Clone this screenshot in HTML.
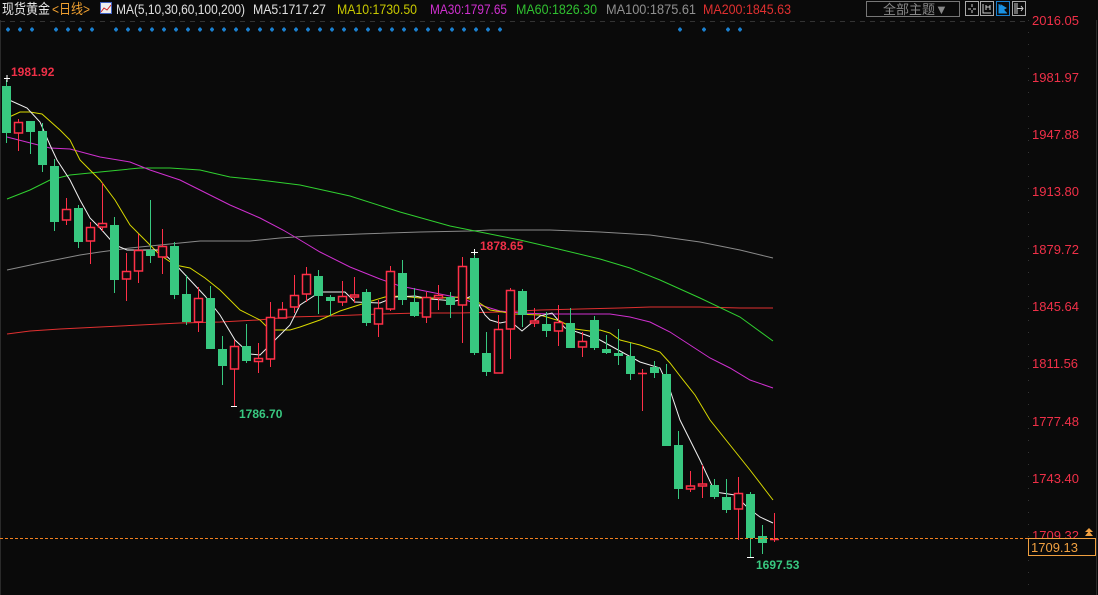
<!DOCTYPE html>
<html><head><meta charset="utf-8"><style>
html,body{margin:0;padding:0;background:#0a0a0a;width:1098px;height:595px;overflow:hidden}
svg{display:block}
text{font-family:"Liberation Sans","Noto Sans CJK SC",sans-serif}
</style></head><body>
<svg width="1098" height="595" viewBox="0 0 1098 595" xmlns="http://www.w3.org/2000/svg">
<rect width="1098" height="595" fill="#0a0a0a"/>
<line x1="0.5" y1="20" x2="0.5" y2="595" stroke="#2a2a2a"/>
<line x1="1096.5" y1="20" x2="1096.5" y2="595" stroke="#2a2a2a"/>
<line x1="1028.5" y1="20" x2="1028.5" y2="595" stroke="#333" stroke-dasharray="1,11"/>
<line x1="0" y1="21.5" x2="1028" y2="21.5" stroke="#333" stroke-dasharray="5,5"/>
<!-- header -->
<text x="2" y="14" font-size="14" fill="#e8e8e8" textLength="48" lengthAdjust="spacingAndGlyphs">现货黄金</text>
<text x="52" y="14" font-size="14" fill="#f0a030" textLength="38" lengthAdjust="spacingAndGlyphs">&lt;日线&gt;</text>
<rect x="100.5" y="2.5" width="11" height="11" fill="#eee" stroke="#4060c0"/>
<path d="M101 12 L104 8 L107 10 L111 5" stroke="#d02020" fill="none"/>
<text x="116" y="14" font-size="14" fill="#e0e0e0" textLength="129" lengthAdjust="spacingAndGlyphs">MA(5,10,30,60,100,200)</text>
<text x="253" y="14" font-size="14" fill="#e0e0e0" textLength="73" lengthAdjust="spacingAndGlyphs">MA5:1717.27</text>
<text x="337" y="14" font-size="14" fill="#c8c800" textLength="80" lengthAdjust="spacingAndGlyphs">MA10:1730.50</text>
<text x="430" y="14" font-size="14" fill="#d030d0" textLength="77" lengthAdjust="spacingAndGlyphs">MA30:1797.65</text>
<text x="516" y="14" font-size="14" fill="#30c030" textLength="81" lengthAdjust="spacingAndGlyphs">MA60:1826.30</text>
<text x="606" y="14" font-size="14" fill="#909090" textLength="90" lengthAdjust="spacingAndGlyphs">MA100:1875.61</text>
<text x="703" y="14" font-size="14" fill="#e03030" textLength="88" lengthAdjust="spacingAndGlyphs">MA200:1845.63</text>
<rect x="866.5" y="1.5" width="93" height="15" fill="#0a0a0a" stroke="#777"/>
<text x="883" y="14" font-size="13" fill="#888">全部主题▼</text>
<rect x="965.5" y="1.5" width="13" height="14" fill="none" stroke="#aaa"/>
<path d="M972 4v3M972 10v3M968 9h3M973 9h3" stroke="#ccc"/>
<rect x="980.5" y="1.5" width="13" height="14" fill="none" stroke="#aaa"/>
<path d="M983 4v9h8M986 5v5M986 7h4M990 5v5" stroke="#ccc" fill="none"/>
<rect x="996.5" y="1.5" width="13" height="14" fill="none" stroke="#1a80d0"/>
<path d="M999 4v9h8M1001 5v6l5-3z" stroke="#1a90e0" fill="#1a90e0"/>
<rect x="1012.5" y="1.5" width="13" height="14" fill="none" stroke="#aaa"/>
<path d="M1015 3v11M1017 3v11M1017 8.5h6M1021 6l2 2.5-2 2.5" stroke="#ccc" fill="none"/>
<!-- dots -->
<g stroke="#1a80d0" stroke-width="2">
<path d="M6 29.5h4M8 27.5v4 M18 29.5h4M20 27.5v4 M30 29.5h4M32 27.5v4 M54 29.5h4M56 27.5v4 M66 29.5h4M68 27.5v4 M78 29.5h4M80 27.5v4 M90 29.5h4M92 27.5v4
M114 29.5h4M116 27.5v4 M126 29.5h4M128 27.5v4 M138 29.5h4M140 27.5v4 M150 29.5h4M152 27.5v4 M162 29.5h4M164 27.5v4 M174 29.5h4M176 27.5v4 M186 29.5h4M188 27.5v4 M198 29.5h4M200 27.5v4 M210 29.5h4M212 27.5v4 M222 29.5h4M224 27.5v4 M234 29.5h4M236 27.5v4 M246 29.5h4M248 27.5v4 M258 29.5h4M260 27.5v4 M270 29.5h4M272 27.5v4 M282 29.5h4M284 27.5v4 M294 29.5h4M296 27.5v4 M306 29.5h4M308 27.5v4 M318 29.5h4M320 27.5v4 M330 29.5h4M332 27.5v4 M342 29.5h4M344 27.5v4 M354 29.5h4M356 27.5v4 M366 29.5h4M368 27.5v4 M378 29.5h4M380 27.5v4 M390 29.5h4M392 27.5v4 M402 29.5h4M404 27.5v4 M414 29.5h4M416 27.5v4 M426 29.5h4M428 27.5v4 M438 29.5h4M440 27.5v4 M450 29.5h4M452 27.5v4 M462 29.5h4M464 27.5v4 M474 29.5h4M476 27.5v4 M486 29.5h4M488 27.5v4 M498 29.5h4M500 27.5v4
M678 29.5h4M680 27.5v4 M702 29.5h4M704 27.5v4 M726 29.5h4M728 27.5v4 M738 29.5h4M740 27.5v4"/>
</g>
<!-- axis labels -->
<g font-size="13" fill="#f03048">
<text x="1032" y="25">2016.05</text>
<text x="1032" y="82">1981.97</text>
<text x="1032" y="139">1947.88</text>
<text x="1032" y="196">1913.80</text>
<text x="1032" y="254">1879.72</text>
<text x="1032" y="311">1845.64</text>
<text x="1032" y="368">1811.56</text>
<text x="1032" y="426">1777.48</text>
<text x="1032" y="483">1743.40</text>
<text x="1032" y="540">1709.32</text>
</g>
<!-- MA lines -->
<g fill="none" stroke-width="1">
<polyline stroke="#e03030" points="7,334 30,331 60,329 100,327 140,325 180,323 220,322 258,320 290,317 330,316 380,314 420,313 460,313 500,312 540,310 580,309 620,308 650,307 700,307 740,308 773,308"/>
<polyline stroke="#8a8a8a" points="7,270 40,263 80,255 100,252 130,248 170,244 200,241 250,241 280,238 310,236 360,234 420,232 470,231 490,230 550,230 600,232 650,235 700,242 740,250 773,258"/>
<polyline stroke="#30d030" points="7,199 30,190 50,180 70,175 100,172 140,168 170,168 200,170 230,177 260,180 300,185 350,196 400,212 450,226 480,232 500,236 520,240 550,247 600,259 630,268 660,280 700,298 740,317 773,341"/>
<polyline stroke="#d030d0" points="7,137 50,148 70,149 100,157 130,162 150,170 180,180 200,190 230,205 260,218 283,230 300,240 320,252 350,267 380,279 400,286 420,290 440,294 460,298 480,305 500,311 520,313 550,314 580,314 610,314 630,317 650,322 670,332 690,345 710,358 730,368 750,380 773,388"/>
<polyline stroke="#d8d800" points="7,118 20,112 30,112 42,114 60,130 70,140 80,160 90,170 100,180 115,200 130,225 145,240 160,255 175,265 190,268 205,278 220,290 240,310 260,320 270,330 290,330 300,327 320,320 340,311 365,303 385,297 400,296 420,298 440,298 460,297 475,300 490,310 515,314 540,315 560,321 575,329 590,331 600,330 610,333 620,340 640,345 660,352 670,363 680,376 695,395 710,420 730,445 750,470 773,500"/>
<polyline stroke="#f0f0f0" points="7,99 27,108 40,122 50,145 57,160 70,180 80,200 90,218 100,228 115,245 127,250 140,250 160,250 175,264 190,280 205,296 220,315 235,340 250,354 260,355 270,345 290,325 300,305 320,292 345,292 355,302 380,303 395,297 415,296 430,299 455,301 464,299 472,296 478,303 485,315 490,320 500,323 510,321 522,331 540,316 552,313 565,328 580,333 600,340 620,351 640,362 660,368 670,390 680,420 700,460 715,492 735,495 748,508 760,517 773,523"/>
</g>
<!-- candles: green -->
<g fill="#38c880" stroke="#38c880">
<line x1="6.5" y1="80" x2="6.5" y2="143"/><rect x="2" y="86" width="9" height="47" stroke="none"/>
<line x1="30.5" y1="121" x2="30.5" y2="154"/><rect x="26" y="121" width="9" height="11" stroke="none"/>
<line x1="42.5" y1="123" x2="42.5" y2="172"/><rect x="38" y="131" width="9" height="34" stroke="none"/>
<line x1="54.5" y1="159" x2="54.5" y2="231"/><rect x="50" y="166" width="9" height="56" stroke="none"/>
<line x1="78.5" y1="205" x2="78.5" y2="248"/><rect x="74" y="208" width="9" height="34" stroke="none"/>
<line x1="114.5" y1="217" x2="114.5" y2="293"/><rect x="110" y="225" width="9" height="55" stroke="none"/>
<line x1="150.5" y1="200" x2="150.5" y2="263"/><rect x="146" y="250" width="9" height="6" stroke="none"/>
<line x1="174.5" y1="242" x2="174.5" y2="299"/><rect x="170" y="246" width="9" height="49" stroke="none"/>
<line x1="186.5" y1="275" x2="186.5" y2="325"/><rect x="182" y="294" width="9" height="28" stroke="none"/>
<line x1="210.5" y1="286" x2="210.5" y2="349"/><rect x="206" y="298" width="9" height="51" stroke="none"/>
<line x1="222.5" y1="336" x2="222.5" y2="385"/><rect x="218" y="349" width="9" height="17" stroke="none"/>
<line x1="246.5" y1="324" x2="246.5" y2="363"/><rect x="242" y="346" width="9" height="15" stroke="none"/>
<line x1="318.5" y1="270" x2="318.5" y2="314"/><rect x="314" y="276" width="9" height="20" stroke="none"/>
<line x1="330.5" y1="295" x2="330.5" y2="316"/><rect x="326" y="297" width="9" height="4" stroke="none"/>
<line x1="366.5" y1="289" x2="366.5" y2="326"/><rect x="362" y="292" width="9" height="31" stroke="none"/>
<line x1="402.5" y1="260" x2="402.5" y2="305"/><rect x="398" y="273" width="9" height="27" stroke="none"/>
<line x1="414.5" y1="288" x2="414.5" y2="317"/><rect x="410" y="302" width="9" height="14" stroke="none"/>
<line x1="450.5" y1="292" x2="450.5" y2="318"/><rect x="446" y="297" width="9" height="8" stroke="none"/>
<line x1="474.5" y1="253" x2="474.5" y2="355"/><rect x="470" y="258" width="9" height="95" stroke="none"/>
<line x1="486.5" y1="332" x2="486.5" y2="376"/><rect x="482" y="353" width="9" height="19" stroke="none"/>
<line x1="522.5" y1="289" x2="522.5" y2="327"/><rect x="518" y="291" width="9" height="24" stroke="none"/>
<line x1="546.5" y1="312" x2="546.5" y2="337"/><rect x="542" y="324" width="9" height="7" stroke="none"/>
<line x1="570.5" y1="308" x2="570.5" y2="348"/><rect x="566" y="323" width="9" height="25" stroke="none"/>
<line x1="594.5" y1="316" x2="594.5" y2="350"/><rect x="590" y="320" width="9" height="28" stroke="none"/>
<line x1="606.5" y1="335" x2="606.5" y2="354"/><rect x="602" y="349" width="9" height="4" stroke="none"/>
<line x1="618.5" y1="329" x2="618.5" y2="365"/><rect x="614" y="353" width="9" height="3" stroke="none"/>
<line x1="630.5" y1="343" x2="630.5" y2="380"/><rect x="626" y="356" width="9" height="18" stroke="none"/>
<line x1="654.5" y1="361" x2="654.5" y2="378"/><rect x="650" y="367" width="9" height="6" stroke="none"/>
<line x1="666.5" y1="364" x2="666.5" y2="446"/><rect x="662" y="374" width="9" height="72" stroke="none"/>
<line x1="678.5" y1="431" x2="678.5" y2="499"/><rect x="674" y="445" width="9" height="44" stroke="none"/>
<line x1="714.5" y1="479" x2="714.5" y2="499"/><rect x="710" y="485" width="9" height="12" stroke="none"/>
<line x1="726.5" y1="479" x2="726.5" y2="513"/><rect x="722" y="497" width="9" height="13" stroke="none"/>
<line x1="750.5" y1="492" x2="750.5" y2="557"/><rect x="746" y="494" width="9" height="44" stroke="none"/>
<line x1="762.5" y1="525" x2="762.5" y2="554"/><rect x="758" y="536" width="9" height="7" stroke="none"/>
</g>
<!-- candles: red -->
<g stroke="#ff3048" fill="#0a0a0a" stroke-width="1">
<line x1="18.5" y1="119" x2="18.5" y2="151"/><rect x="14.5" y="122.5" width="8" height="10.5" stroke-width="1.5"/>
<line x1="66.5" y1="198" x2="66.5" y2="225"/><rect x="62.5" y="209.5" width="8" height="10.5" stroke-width="1.5"/>
<line x1="90.5" y1="222" x2="90.5" y2="264"/><rect x="86.5" y="227.5" width="8" height="13.5" stroke-width="1.5"/>
<line x1="102.5" y1="183" x2="102.5" y2="231"/><rect x="98.5" y="223.5" width="8" height="3.5" stroke-width="1.5"/>
<line x1="126.5" y1="253" x2="126.5" y2="301"/><rect x="122.5" y="271.5" width="8" height="7.5" stroke-width="1.5"/>
<line x1="138.5" y1="234" x2="138.5" y2="283"/><rect x="134.5" y="250.5" width="8" height="20.5" stroke-width="1.5"/>
<line x1="162.5" y1="229" x2="162.5" y2="274"/><rect x="158.5" y="246.5" width="8" height="10.5" stroke-width="1.5"/>
<line x1="198.5" y1="287" x2="198.5" y2="332"/><rect x="194.5" y="298.5" width="8" height="23.5" stroke-width="1.5"/>
<line x1="234.5" y1="340" x2="234.5" y2="407"/><rect x="230.5" y="346.5" width="8" height="22.5" stroke-width="1.5"/>
<line x1="258.5" y1="343" x2="258.5" y2="373"/><rect x="254.5" y="358.5" width="8" height="3" stroke-width="1.5"/>
<line x1="270.5" y1="302" x2="270.5" y2="367"/><rect x="266.5" y="317.5" width="8" height="41.5" stroke-width="1.5"/>
<line x1="282.5" y1="302" x2="282.5" y2="318"/><rect x="278.5" y="309.5" width="8" height="8.5" stroke-width="1.5"/>
<line x1="294.5" y1="275" x2="294.5" y2="313"/><rect x="290.5" y="295.5" width="8" height="11.5" stroke-width="1.5"/>
<line x1="306.5" y1="267" x2="306.5" y2="302"/><rect x="302.5" y="274.5" width="8" height="19.5" stroke-width="1.5"/>
<line x1="342.5" y1="281" x2="342.5" y2="306"/><rect x="338.5" y="296.5" width="8" height="5.5" stroke-width="1.5"/>
<line x1="354.5" y1="277" x2="354.5" y2="303"/><rect x="350.5" y="295" width="8" height="2" stroke-width="1.5"/>
<line x1="378.5" y1="300" x2="378.5" y2="337"/><rect x="374.5" y="308.5" width="8" height="15.5" stroke-width="1.5"/>
<line x1="390.5" y1="266" x2="390.5" y2="311"/><rect x="386.5" y="271.5" width="8" height="37.5" stroke-width="1.5"/>
<line x1="426.5" y1="292" x2="426.5" y2="323"/><rect x="422.5" y="297.5" width="8" height="19.5" stroke-width="1.5"/>
<line x1="438.5" y1="285" x2="438.5" y2="310"/><rect x="434.5" y="295.5" width="8" height="2.5" stroke-width="1.5"/>
<line x1="462.5" y1="257" x2="462.5" y2="343"/><rect x="458.5" y="266.5" width="8" height="38.5" stroke-width="1.5"/>
<line x1="498.5" y1="315" x2="498.5" y2="373"/><rect x="494.5" y="329.5" width="8" height="43.5" stroke-width="1.5"/>
<line x1="510.5" y1="288" x2="510.5" y2="359"/><rect x="506.5" y="290.5" width="8" height="38.5" stroke-width="1.5"/>
<line x1="534.5" y1="308" x2="534.5" y2="327"/><rect x="530.5" y="321" width="8" height="2" stroke-width="1.5"/>
<line x1="558.5" y1="305" x2="558.5" y2="346"/><rect x="554.5" y="322.5" width="8" height="8.5" stroke-width="1.5"/>
<line x1="582.5" y1="332" x2="582.5" y2="357"/><rect x="578.5" y="341.5" width="8" height="5.5" stroke-width="1.5"/>
<line x1="642.5" y1="369" x2="642.5" y2="411"/><line x1="638" y1="373.5" x2="647" y2="373.5" stroke-width="1.5"/>
<line x1="690.5" y1="471" x2="690.5" y2="492"/><rect x="686.5" y="486" width="8" height="3" stroke-width="1.5"/>
<line x1="702.5" y1="465" x2="702.5" y2="498"/><rect x="698.5" y="484" width="8" height="2" stroke-width="1.5"/>
<line x1="738.5" y1="477" x2="738.5" y2="540"/><rect x="734.5" y="493.5" width="8" height="15.5" stroke-width="1.5"/>
<line x1="774.5" y1="513" x2="774.5" y2="542"/><line x1="770" y1="539.5" x2="779" y2="539.5" stroke-width="1.5"/>
</g>
<!-- high/low markers -->
<g stroke="#fff">
<path d="M4 78.5h6M7 75v7"/>
<path d="M231 406.5h6"/>
<path d="M471 252.5h7M474.5 249v6"/>
<path d="M747 557.5h7"/>
</g>
<g font-size="12" font-weight="bold">
<text x="11" y="76" fill="#f03048">1981.92</text>
<text x="239" y="418" fill="#38c880">1786.70</text>
<text x="480" y="250" fill="#f03048">1878.65</text>
<text x="756" y="569" fill="#38c880">1697.53</text>
</g>
<!-- current price line -->
<line x1="0" y1="538.5" x2="1028" y2="538.5" stroke="#f08020" stroke-dasharray="3,2"/>
<rect x="1028.5" y="538.5" width="67" height="17" fill="#0a0a0a" stroke="#f0a040"/>
<text x="1031" y="552" font-size="13" fill="#f0a040">1709.13</text>
<path d="M1085 536l4-5 4 5zM1085 532l4-4 4 4z" fill="#f0a040"/>
</svg>
</body></html>
